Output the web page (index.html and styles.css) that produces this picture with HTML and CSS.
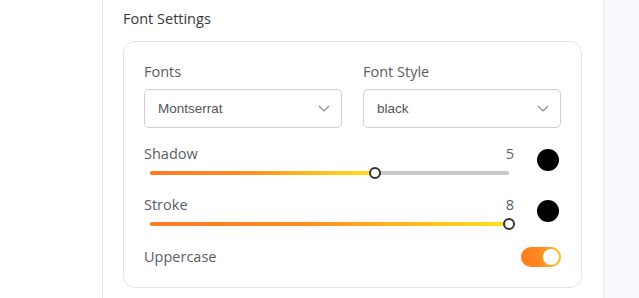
FILE: index.html
```html
<!DOCTYPE html>
<html>
<head>
<meta charset="utf-8">
<link rel="stylesheet" href="styles.css">
</head>
<body>
<div class="layout">
  <div class="side"></div>
  <main class="panel">
    <h2 class="title">Font Settings</h2>
    <section class="card">
      <div class="selects">
        <div class="field">
          <div class="label">Fonts</div>
          <div class="select">
            <span>Montserrat</span>
            <svg class="chev" width="12" height="7" viewBox="0 0 12 7"><path d="M1 1l5 5 5-5" fill="none" stroke="#888" stroke-width="1.1"/></svg>
          </div>
        </div>
        <div class="field">
          <div class="label">Font Style</div>
          <div class="select">
            <span>black</span>
            <svg class="chev" width="12" height="7" viewBox="0 0 12 7"><path d="M1 1l5 5 5-5" fill="none" stroke="#888" stroke-width="1.1"/></svg>
          </div>
        </div>
      </div>

      <div class="srow">
        <div class="sbody">
          <div class="shead"><span class="label">Shadow</span><span class="val">5</span></div>
          <div class="track">
            <div class="fill" style="width:62.8%"><span class="thumb"></span></div>
          </div>
        </div>
        <span class="swatch"></span>
      </div>

      <div class="srow">
        <div class="sbody">
          <div class="shead"><span class="label">Stroke</span><span class="val">8</span></div>
          <div class="track">
            <div class="fill" style="width:100%"><span class="thumb"></span></div>
          </div>
        </div>
        <span class="swatch"></span>
      </div>

      <div class="trow">
        <span class="label">Uppercase</span>
        <span class="toggle"><span class="knob"></span></span>
      </div>
    </section>
  </main>
  <div class="aside"></div>
</div>
</body>
</html>
```

FILE: styles.css
```css
* { box-sizing: border-box; }
html, body { margin: 0; padding: 0; background: #fff; }
body { font-family: "Open Sans", "Noto Sans", sans-serif; }

.layout { display: flex; height: 298px; overflow: hidden; }
.side { width: 103px; border-right: 1px solid #e6e6e8; flex: none; }
.panel { width: 500px; flex: none; padding: 9px 21px 0 20px; }
.aside { flex: 1; background: #f9f9fe; border-left: 1px solid #ececf2; }

.title {
  margin: 0 0 12px;
  font-size: 14.5px;
  line-height: 20px;
  font-weight: 400;
  color: #383838;
}

.card {
  border: 1px solid #e4e4e6;
  border-radius: 12px;
  padding: 20px 20px 20px 20px;
}

.label { font-size: 14.5px; line-height: 20px; color: #5b5b66; }

.selects { display: flex; gap: 21px; margin-bottom: 16px; }
.field { flex: 1; }
.field .label { margin-bottom: 7px; }
.select {
  height: 39px;
  border: 1px solid #cfcfd3;
  border-radius: 5px;
  display: flex;
  align-items: center;
  justify-content: space-between;
  padding: 0 11px 0 13px;
  font-family: "Liberation Sans", Arial, sans-serif;
  font-size: 13.5px;
  color: #555;
}
.chev { display: block; }

.srow { display: flex; height: 51px; }
.sbody { flex: 1; }
.shead { display: flex; justify-content: space-between; }
.val { font-size: 14.5px; line-height: 20px; color: #5b5b66; }
.track {
  margin: 7px 5px 0 6px;
  height: 4px;
  border-radius: 2px;
  background: #c8c8c8;
  position: relative;
}
.fill {
  height: 4px;
  border-radius: 2px;
  background: linear-gradient(90deg, #ff7a22 0%, #ff8a22 40%, #ffe21a 100%);
  position: relative;
}
.thumb {
  position: absolute;
  right: -6px;
  top: -4px;
  width: 12px;
  height: 12px;
  border-radius: 50%;
  background: #fff;
  border: 2px solid #333;
}
.swatch {
  width: 22px;
  height: 22px;
  border-radius: 50%;
  background: #000;
  margin: 5px 2px 0 23px;
  flex: none;
}

.trow { display: flex; justify-content: space-between; align-items: center; height: 20px; margin-top: 1px; }
.toggle {
  width: 40px;
  height: 20px;
  border-radius: 10px;
  background: linear-gradient(90deg, #ff7a22 0%, #ff8a22 45%, #ffc21c 100%);
  display: flex;
  align-items: center;
  justify-content: flex-end;
  padding-right: 2px;
}
.knob {
  width: 16px;
  height: 16px;
  border-radius: 50%;
  background: #fff;
}
```
